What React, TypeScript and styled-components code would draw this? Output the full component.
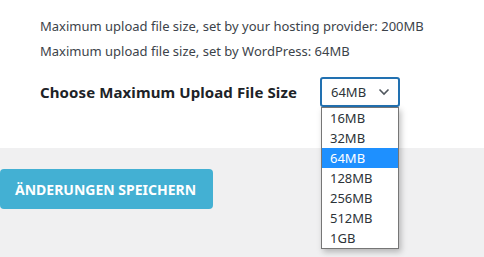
import React from 'react'
import styled, { createGlobalStyle } from 'styled-components'

const GlobalStyle = createGlobalStyle`
  html, body {
    margin: 0;
    padding: 0;
    background: #f0f0f1;
    font-family: 'Noto Sans', 'Open Sans', sans-serif;
  }
`

const Panel = styled.div`
  background: #fff;
  height: 148px;
  padding: 16px 0 0 40px;
  box-sizing: border-box;
`

const Note = styled.p`
  margin: 0 0 5px;
  font-size: 13px;
  line-height: 20px;
  color: #3c434a;
`

const Row = styled.div`
  display: grid;
  grid-template-columns: 280px auto;
  align-items: center;
  margin-top: 16px;
`

const Label = styled.div`
  font-size: 15px;
  font-weight: 700;
  letter-spacing: 0.1px;
  color: #1d2327;
`

const SelectWrap = styled.div`
  position: relative;
  width: 80px;
`

const SelectBox = styled.div`
  width: 80px;
  height: 30px;
  box-sizing: border-box;
  border: 2px solid #2271b1;
  border-radius: 3px;
  display: flex;
  align-items: center;
  justify-content: space-between;
  padding: 0 8px 0 9px;
  font-size: 13px;
  color: #2c3338;
`

const OptionList = styled.ul`
  position: absolute;
  left: 1px;
  top: 30px;
  width: 78px;
  margin: 0;
  padding: 0;
  list-style: none;
  box-sizing: border-box;
  background: #fff;
  border: 1px solid #767676;
  box-shadow: 2px 3px 6px rgba(0, 0, 0, 0.25);
`

const Option = styled.li<{ $active?: boolean }>`
  height: 20px;
  line-height: 20px;
  padding-left: 8px;
  font-size: 13px;
  color: ${(p) => (p.$active ? '#fff' : '#2c3338')};
  background: ${(p) => (p.$active ? '#1e90ff' : 'transparent')};
`

const Footer = styled.div`
  height: 109px;
  padding-top: 21px;
  box-sizing: border-box;
`

const SaveButton = styled.button`
  width: 213px;
  height: 40px;
  border: 0;
  border-radius: 4px;
  background: #43b0d3;
  color: #fff;
  font-family: inherit;
  font-size: 14px;
  font-weight: 700;
  text-align: left;
  padding: 0 0 0 15px;
`

const sizes = ['16MB', '32MB', '64MB', '128MB', '256MB', '512MB', '1GB']

export default function App() {
  return (
    <>
      <GlobalStyle />
      <Panel>
        <Note>Maximum upload file size, set by your hosting provider: 200MB</Note>
        <Note>Maximum upload file size, set by WordPress: 64MB</Note>
        <Row>
          <Label>Choose Maximum Upload File Size</Label>
          <SelectWrap>
            <SelectBox>
              <span>64MB</span>
              <svg width="12" height="8" viewBox="0 0 12 8">
                <path d="M1.5 1.5 L6 6 L10.5 1.5" fill="none" stroke="#50575e" strokeWidth="1.6" />
              </svg>
            </SelectBox>
            <OptionList>
              {sizes.map((s) => (
                <Option key={s} $active={s === '64MB'}>
                  {s}
                </Option>
              ))}
            </OptionList>
          </SelectWrap>
        </Row>
      </Panel>
      <Footer>
        <SaveButton>ÄNDERUNGEN SPEICHERN</SaveButton>
      </Footer>
    </>
  )
}
